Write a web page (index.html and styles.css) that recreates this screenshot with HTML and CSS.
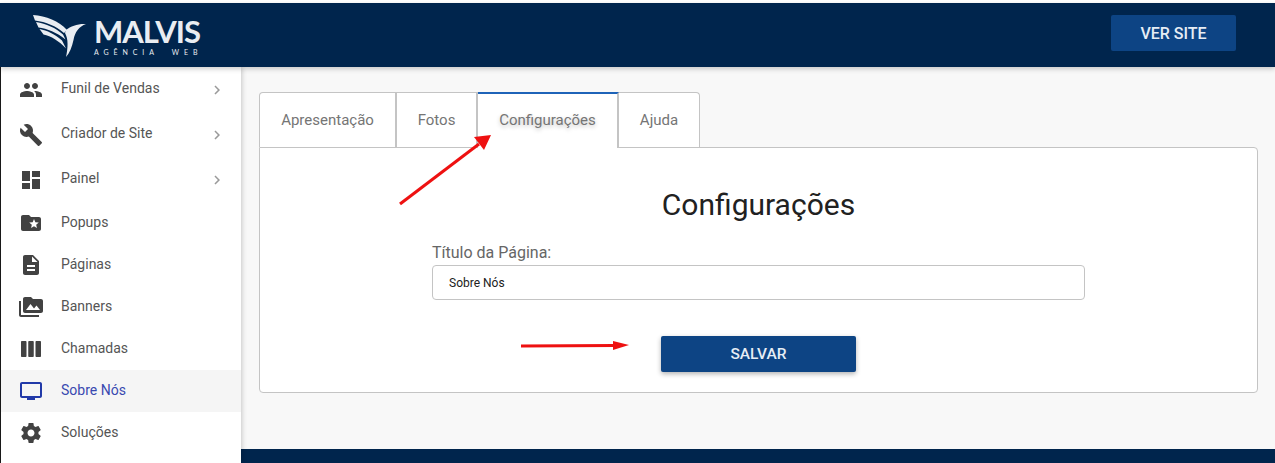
FILE: index.html
```html
<!DOCTYPE html>
<html>
  <head>
    <meta charset="utf-8">
    <title>Sobre Nós</title>
    <link rel="stylesheet" href="styles.css">
  </head>
  <body>
    <header class="topbar">
      <a class="logo">
        <svg class="logo-wing" viewBox="33 12 54 44" width="54" height="44">
          <path d="M33 13C46 14 59 19 67 28L64 31C56 24 46 20 35 18.500Z" />
          <path d="M36 20C46 21.500 56 26 63 32.500L65.500 37.500C57 30.500 47 26.500 38.500 25.500Z" />
          <path d="M39.500 27C47 28.500 55 32 62 38.500L66 46.500C59 39 51 34 43.500 32.500Z" />
          <path d="M66 28C71 24 78 21.500 86 22C79 24.500 75 30 73.500 38C72 45 69.500 51 66 55C68 46 68.500 37 65 31Z" />
        </svg>
        <div class="logo-text">
          <span class="logo-name">MALVIS</span>
          <span class="logo-sub">AGÊNCIA&nbsp;&nbsp;WEB</span>
        </div>
      </a>
      <button type="button" class="button button-site">VER SITE</button>
    </header>
    <div class="layout">
      <nav class="sidebar">
        <a class="menu-item menu-tall">
          <svg class="menu-icon" viewBox="0 0 24 24"><path d="M16 11c1.66 0 2.99-1.34 2.99-3S17.66 5 16 5c-1.66 0-3 1.34-3 3s1.34 3 3 3zm-8 0c1.66 0 2.99-1.34 2.99-3S9.66 5 8 5C6.34 5 5 6.34 5 8s1.34 3 3 3zm0 2c-2.33 0-7 1.17-7 3.5V19h14v-2.5c0-2.33-4.67-3.5-7-3.5zm8 0c-.29 0-.62.02-.97.05 1.16.84 1.97 1.97 1.97 3.45V19h6v-2.5c0-2.33-4.67-3.5-7-3.5z"/></svg>
          <span class="menu-label">Funil de Vendas</span>
          <svg class="menu-arrow" viewBox="0 0 24 24"><path d="M10 6L8.59 7.41 13.17 12l-4.58 4.59L10 18l6-6z"/></svg>
        </a>
        <a class="menu-item menu-tall">
          <svg class="menu-icon" viewBox="0 0 24 24"><path d="M22.7 19l-9.1-9.1c.9-2.3.4-5-1.5-6.9-2-2-5-2.4-7.4-1.3L9 6 6 9 1.6 4.7C.4 7.1.9 10.1 2.9 12.1c1.9 1.9 4.6 2.4 6.9 1.5l9.1 9.1c.4.4 1 .4 1.4 0l2.3-2.3c.5-.4.5-1.1.1-1.4z"/></svg>
          <span class="menu-label">Criador de Site</span>
          <svg class="menu-arrow" viewBox="0 0 24 24"><path d="M10 6L8.59 7.41 13.17 12l-4.58 4.59L10 18l6-6z"/></svg>
        </a>
        <a class="menu-item menu-tall">
          <svg class="menu-icon" viewBox="0 0 24 24"><path d="M3 13h8V3H3v10zm0 8h8v-6H3v6zm10 0h8V11h-8v10zm0-18v6h8V3h-8z"/></svg>
          <span class="menu-label">Painel</span>
          <svg class="menu-arrow" viewBox="0 0 24 24"><path d="M10 6L8.59 7.41 13.17 12l-4.58 4.59L10 18l6-6z"/></svg>
        </a>
        <a class="menu-item">
          <svg class="menu-icon" viewBox="0 0 24 24"><path d="M20 6h-8l-2-2H4c-1.1 0-1.99.9-1.99 2L2 18c0 1.1.9 2 2 2h16c1.1 0 2-.9 2-2V8c0-1.1-.9-2-2-2zm-2.06 11L15 15.28 12.06 17l.78-3.33-2.59-2.24 3.41-.29L15 8l1.34 3.14 3.41.29-2.59 2.24.78 3.33z"/></svg>
          <span class="menu-label">Popups</span>
        </a>
        <a class="menu-item">
          <svg class="menu-icon" viewBox="0 0 24 24"><path d="M14 2H6c-1.1 0-1.99.9-1.99 2L4 20c0 1.1.89 2 1.99 2H18c1.1 0 2-.9 2-2V8l-6-6zm2 16H8v-2h8v2zm0-4H8v-2h8v2zm-3-5V3.5L18.5 9H13z"/></svg>
          <span class="menu-label">Páginas</span>
        </a>
        <a class="menu-item">
          <svg class="menu-icon" viewBox="0 0 24 24"><path d="M2 6H0v5h.01L0 20c0 1.1.9 2 2 2h18v-2H2V6zm20-2h-8l-2-2H6c-1.1 0-1.99.9-1.99 2L4 16c0 1.1.9 2 2 2h16c1.1 0 2-.9 2-2V6c0-1.1-.9-2-2-2zM7 15l4.5-6 3.5 4.51 2.5-3.01L21 15H7z"/></svg>
          <span class="menu-label">Banners</span>
        </a>
        <a class="menu-item">
          <svg class="menu-icon" viewBox="0 0 24 24"><path d="M3 4h3.500c.55 0 1 .45 1 1v14c0 .55-.45 1-1 1H3c-.55 0-1-.45-1-1V5c0-.55.45-1 1-1zm7.250 0h3.500c.55 0 1 .45 1 1v14c0 .55-.45 1-1 1h-3.500c-.55 0-1-.45-1-1V5c0-.55.45-1 1-1zm7.250 0H21c.55 0 1 .45 1 1v14c0 .55-.45 1-1 1h-3.500c-.55 0-1-.45-1-1V5c0-.55.45-1 1-1z"/></svg>
          <span class="menu-label">Chamadas</span>
        </a>
        <a class="menu-item active">
          <svg class="menu-icon" viewBox="0 0 24 24"><path d="M21 3H3c-1.1 0-2 .9-2 2v12c0 1.1.9 2 2 2h5v2h8v-2h5c1.1 0 1.99-.9 1.99-2L23 5c0-1.1-.9-2-2-2zm0 14H3V5h18v12z"/></svg>
          <span class="menu-label">Sobre Nós</span>
        </a>
        <a class="menu-item">
          <svg class="menu-icon" viewBox="0 0 24 24"><path d="M19.43 12.98c.04-.32.07-.64.07-.98s-.03-.66-.07-.98l2.11-1.65c.19-.15.24-.42.12-.64l-2-3.46c-.12-.22-.39-.3-.61-.22l-2.49 1c-.52-.4-1.08-.73-1.69-.98l-.38-2.65C14.46 2.18 14.25 2 14 2h-4c-.25 0-.46.18-.49.42l-.38 2.65c-.61.25-1.17.59-1.69.98l-2.49-1c-.23-.09-.49 0-.61.22l-2 3.46c-.13.22-.07.49.12.64l2.11 1.65c-.04.32-.07.65-.07.98s.03.66.07.98l-2.11 1.65c-.19.15-.24.42-.12.64l2 3.46c.12.22.39.3.61.22l2.49-1c.52.4 1.08.73 1.69.98l.38 2.65c.03.24.24.42.49.42h4c.25 0 .46-.18.49-.42l.38-2.65c.61-.25 1.17-.59 1.69-.98l2.49 1c.23.09.49 0 .61-.22l2-3.46c.12-.22.07-.49-.12-.64l-2.11-1.65zM12 15.5c-1.93 0-3.5-1.57-3.5-3.5s1.57-3.5 3.5-3.5 3.5 1.57 3.5 3.5-1.57 3.5-3.5 3.5z"/></svg>
          <span class="menu-label">Soluções</span>
        </a>
      </nav>
      <div class="main">
        <section class="content">
          <div class="tabs">
            <a class="tab tab-first">Apresentação</a>
            <a class="tab tab-second">Fotos</a>
            <a class="tab tab-active">Configurações</a>
            <a class="tab tab-last">Ajuda</a>
          </div>
          <div class="panel">
            <h1 class="panel-title">Configurações</h1>
            <form class="panel-form">
              <label for="page-title" class="field-label">Título da Página:</label>
              <input type="text" id="page-title" class="field-input" value="Sobre Nós">
              <button type="button" class="button button-save">SALVAR</button>
            </form>
          </div>
        </section>
        <footer class="footer"></footer>
      </div>
    </div>
    <!-- red arrows painted over the screen -->
    <svg class="annotations" width="1275" height="463" viewBox="0 0 1275 463">
      <line x1="400" y1="204" x2="479" y2="144" stroke="#ee1111" stroke-width="3" />
      <polygon points="491,135 484,150 474,137" fill="#ee1111" />
      <line x1="521" y1="346" x2="615" y2="345.500" stroke="#ee1111" stroke-width="3" />
      <polygon points="629,345 613,341 613,350" fill="#ee1111" />
    </svg>
  </body>
</html>
```

FILE: styles.css
```css
:root {
  --navy: #00254d;
  --blue: #0d4484;
  --line: #c4c4c4;
  --text: #555555;
}
*,*:before,*:after { box-sizing: border-box; }
html, body {
  height: 100%;
}
body {
  margin: 0;
  padding-top: 3px;
  display: flex;
  flex-direction: column;
  overflow: hidden;
  font-family: "Roboto", sans-serif;
  background-color: #ffffff;
}

.topbar {
  height: 64px;
  flex: none;
  display: flex;
  align-items: center;
  justify-content: space-between;
  padding: 0 39px 0 33px;
  background-color: var(--navy);
  box-shadow: 0 2px 5px rgba(0, 0, 0, 0.2);
  position: relative;
  z-index: 2;
}
.logo {
  display: flex;
  align-items: flex-start;
  gap: 7px;
}
.logo-wing {
  fill: #e9edf2;
  margin-top: 1px;
}
.logo-text {
  display: flex;
  flex-direction: column;
  color: #e9edf2;
  padding-top: 2px;
}
.logo-name {
  font-family: "Lato", sans-serif;
  font-size: 31px;
  line-height: 32px;
  font-weight: 700;
  letter-spacing: -1px;
}
.logo-sub {
  font-family: "Lato", sans-serif;
  font-size: 7px;
  line-height: 10px;
  font-weight: 400;
  letter-spacing: 4.900px;
  white-space: nowrap;
}

.button {
  border: none;
  border-radius: 2px;
  font-family: inherit;
  font-weight: 500;
  color: #e6edf5;
  background-color: var(--blue);
  cursor: pointer;
}
.button-site {
  width: 125px;
  height: 36px;
  margin-bottom: 4px;
  font-size: 16px;
}
.button-save {
  width: 195px;
  height: 36px;
  margin: 36px 0 0 229px;
  font-size: 15.500px;
  box-shadow: 0 2px 5px rgba(0, 0, 0, 0.3);
}

.layout {
  flex: 1;
  display: flex;
  min-height: 0;
  border-left: 1px solid #1a1a1a;
}
.sidebar {
  width: 240px;
  flex: none;
  background-color: #ffffff;
  box-shadow: 1px 0 5px rgba(0, 0, 0, 0.2);
  position: relative;
  z-index: 1;
}
.menu-item {
  height: 42px;
  display: flex;
  align-items: center;
  padding: 0 15px 0 18px;
  color: var(--text);
  font-size: 14px;
}
.menu-tall {
  height: 45px;
}
.menu-icon {
  width: 24px;
  height: 24px;
  flex: none;
  fill: #424242;
}
.menu-label {
  flex: 1;
  margin-left: 18px;
  padding-bottom: 2px;
}
.menu-tall .menu-label {
  padding-bottom: 4px;
}
.menu-arrow {
  width: 18px;
  height: 18px;
  fill: #9a9a9a;
}
.menu-item.active {
  background-color: #f5f5f5;
  color: #3949b0;
}
.menu-item.active .menu-icon {
  fill: #2139a8;
}

.main {
  flex: 1;
  display: flex;
  flex-direction: column;
  background-color: #f8f8f8;
}
.content {
  flex: 1;
  padding: 25px 17px 0 18px;
}
.tabs {
  display: flex;
  height: 55px;
}
.tab {
  display: flex;
  align-items: center;
  justify-content: center;
  width: 81px;
  padding-bottom: 1px;
  font-size: 15px;
  color: #757575;
  background-color: #ffffff;
  border: 1px solid var(--line);
  border-bottom: none;
  border-left-width: 0;
}
.tab-first {
  width: 138px;
  border-left-width: 1px;
  border-right-width: 2px;
  border-top-left-radius: 4px;
}
.tab-second {
  border-right-width: 2px;
}
.tab-active {
  width: 141px;
  height: 56px;
  padding-bottom: 2px;
  border-top: 2px solid #1e63b8;
  border-right-width: 2px;
  text-shadow: 0 2px 4px rgba(0, 0, 0, 0.25);
  position: relative;
  z-index: 1;
}
.tab-last {
  border-top-right-radius: 4px;
}
.panel {
  height: 246px;
  padding-top: 38px;
  background-color: #ffffff;
  border: 1px solid var(--line);
  border-radius: 0 4px 4px 4px;
}
.panel-title {
  margin: 0;
  font-size: 30px;
  line-height: 38px;
  font-weight: 400;
  text-align: center;
  color: #212121;
}
.panel-form {
  width: 653px;
  margin: 19px 0 0 172px;
}
.field-label {
  display: block;
  font-size: 16px;
  line-height: 19px;
  color: #666666;
}
.field-input {
  display: block;
  width: 100%;
  height: 35px;
  margin-top: 3px;
  padding: 0 16px;
  border: 1px solid var(--line);
  border-radius: 4px;
  font-family: inherit;
  font-size: 12px;
  color: #212121;
  background-color: #ffffff;
}
.footer {
  height: 14px;
  flex: none;
  background-color: var(--navy);
}

.annotations {
  position: absolute;
  left: 0;
  top: 0;
  pointer-events: none;
  z-index: 3;
}
```
